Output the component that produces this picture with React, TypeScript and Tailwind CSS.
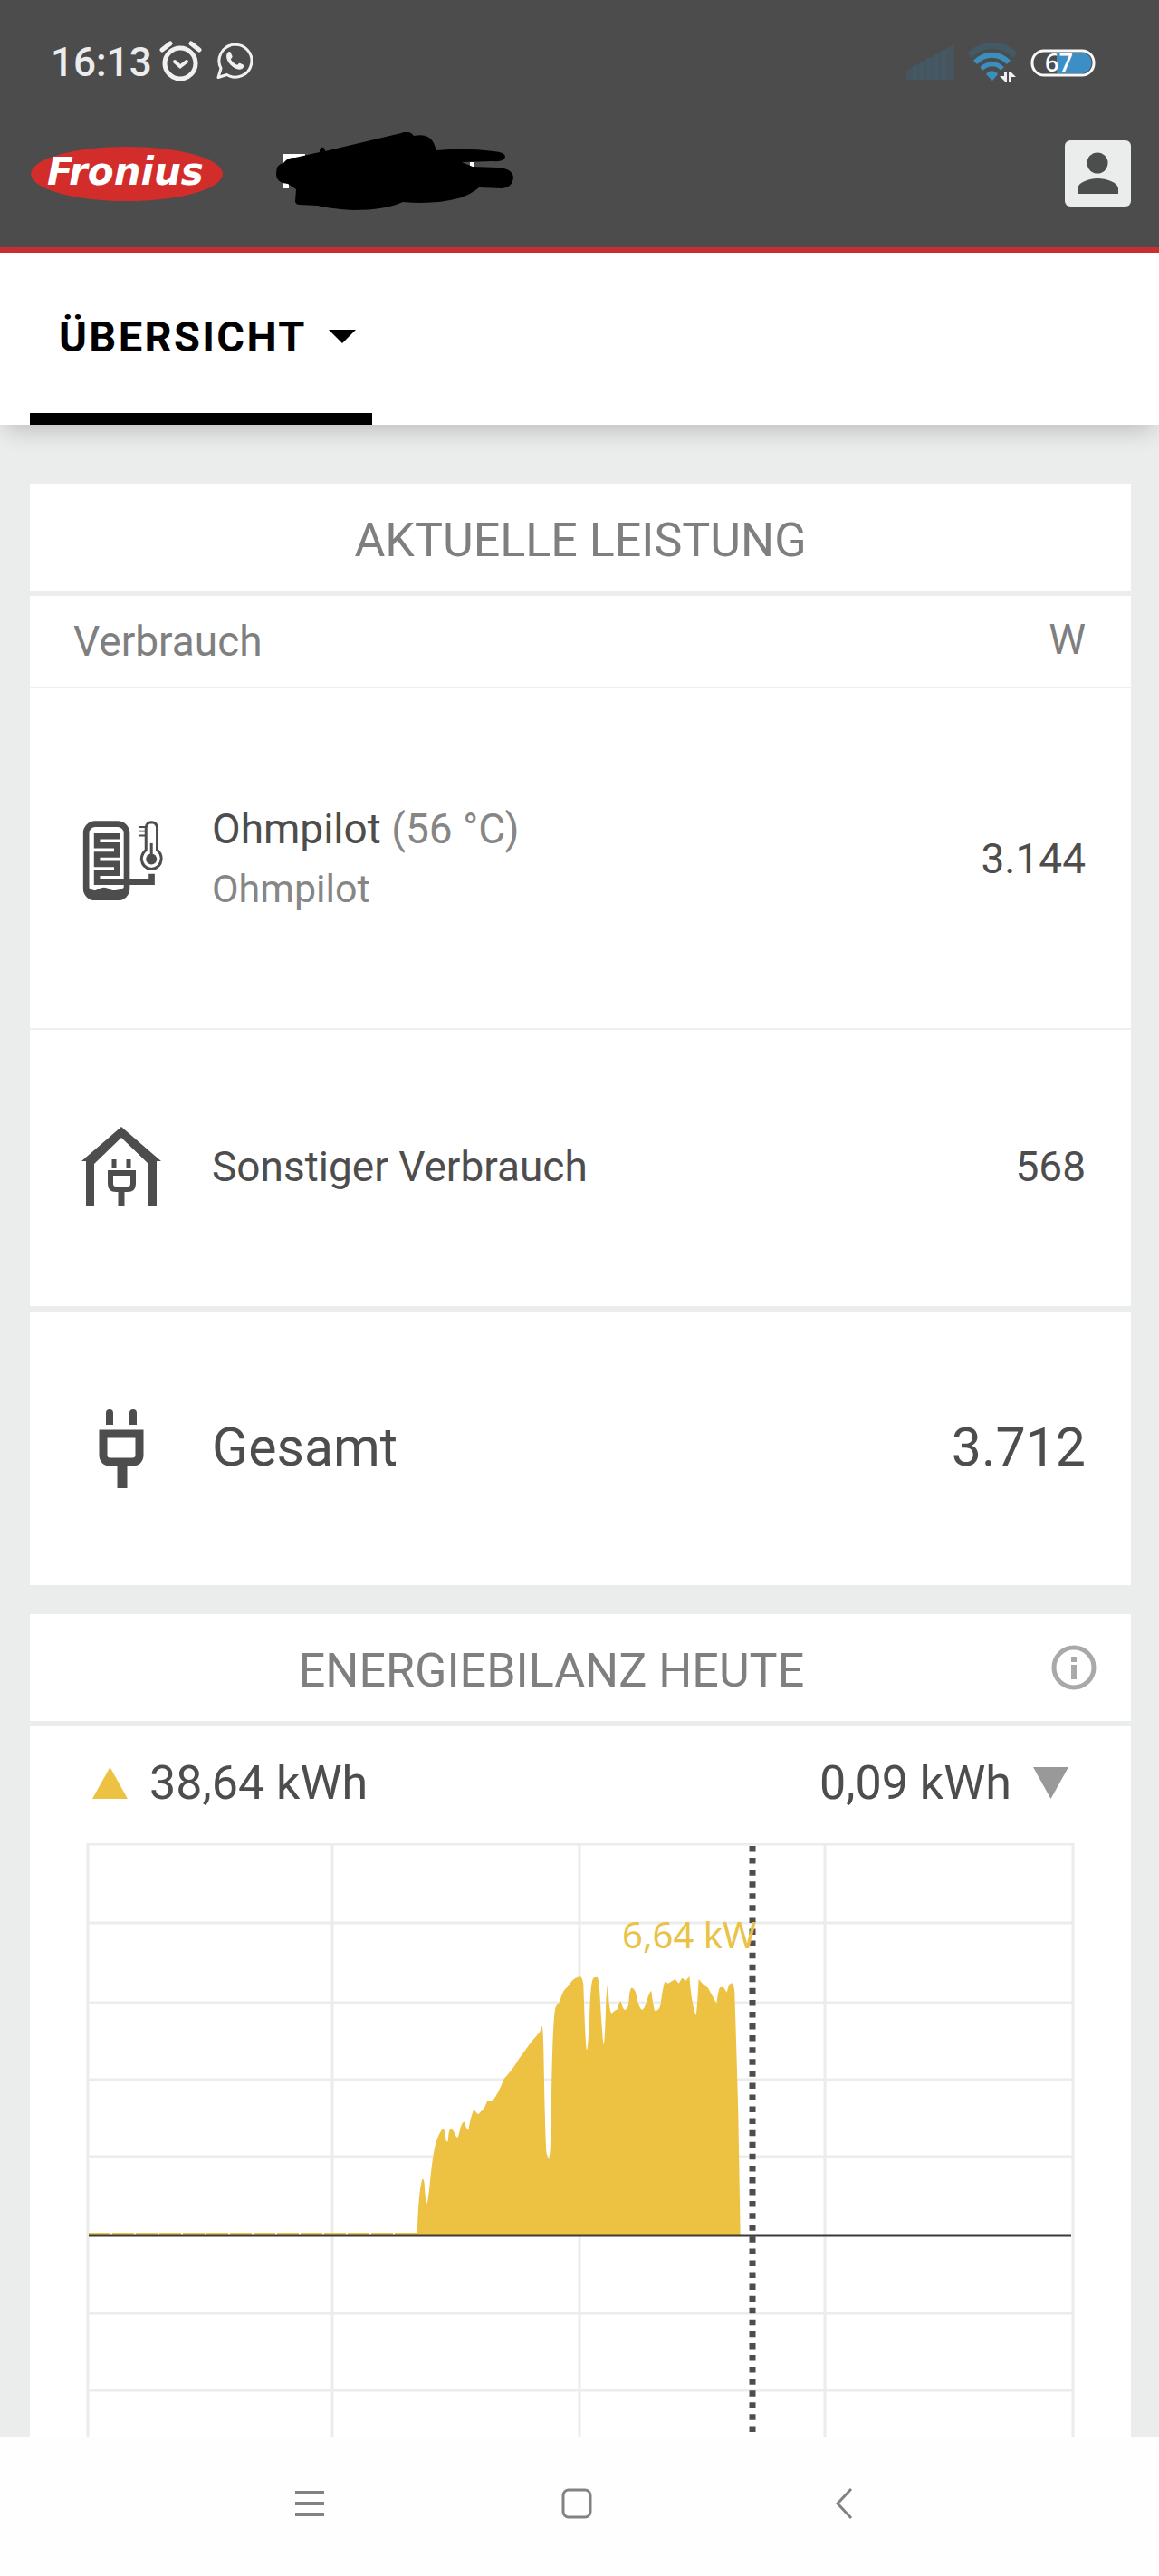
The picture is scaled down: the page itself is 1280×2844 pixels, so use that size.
import type { ReactNode } from 'react';

function AlarmIcon() {
  return (
    <svg viewBox="0 0 47 44" className="h-[44px] w-[47px]" fill="none" stroke="#f0f0f0" strokeLinecap="round" aria-label="Wecker">
      <circle cx="23" cy="25" r="17" strokeWidth="5" />
      <path d="M3 10 L12 3 M35 3 L44 10" strokeWidth="5" />
      <path d="M17 23 L23 28.500 L30 23" strokeWidth="4" />
    </svg>
  );
}

function ChatIcon() {
  return (
    <svg viewBox="0 0 40 40" className="size-10" aria-label="WhatsApp">
      <path d="M2 38.500 L5 28.500 A18 18 0 1 1 11.500 35.500 Z" fill="none" stroke="#f0f0f0" strokeWidth="3" strokeLinejoin="round" />
      <path d="M13 10.500 C14.500 9.500 15.500 10 16 11.500 L17.500 15 C18 16 16.500 17.500 15.800 18.500 C17.500 21.500 20 23.700 23 24.800 C24 24 24.800 22.500 26 22.800 L29.500 24.500 C31 25.200 30 27.500 29 28.500 C25 31.500 19.500 28.500 15.500 24.500 C11 19.500 9.500 14 13 10.500 Z" fill="#f0f0f0" />
    </svg>
  );
}

function SignalIcon() {
  return (
    <svg viewBox="0 0 53 40" className="h-10 w-[53px]" aria-label="Mobilfunk">
      <path d="M0 29 L53 0 V39 H0 Z" fill="#47555e" />
      <path d="M9 24 V39 M17 20 V39 M25 15 V39 M33 11 V39 M41 6 V39" stroke="#435966" strokeWidth="4" />
    </svg>
  );
}

function WifiIcon() {
  return (
    <svg viewBox="0 0 54 42" className="h-[42px] w-[54px]" aria-label="WLAN">
      <path d="M2 13 C16 -1 38 -1 52 13" fill="none" stroke="#435966" strokeWidth="7" />
      <path d="M8 21 C19 10 34 10 45 21" fill="none" stroke="#3b8fc0" strokeWidth="6" />
      <path d="M15 28 C22 21 32 21 38 28" fill="none" stroke="#3b8fc0" strokeWidth="5" />
      <path d="M20 34 C24 29 29 29 33 34 L27 41 Z" fill="#3b8fc0" />
      <path d="M40 31 H43 V42 H41 L35 36 H40 Z M45 42 V31 H47 L53 37 H48 V42 Z" fill="#f0f0f0" />
    </svg>
  );
}

function BatteryIcon() {
  return (
    <svg viewBox="0 -6 72 43" className="h-[43px] w-[72px]" aria-label="Akku 67 Prozent">
      <path d="M29 4 H56 A11 11 0 0 1 56 27 H29 Z" fill="#3b8fc6" />
      <rect x="2" y="2" width="68" height="27" rx="13" fill="none" stroke="#f8f8f8" strokeWidth="3" />
      <text x="16" y="25" fontFamily="Noto Sans, sans-serif" fontSize="27" fontWeight="500" fill="#ffffff">67</text>
    </svg>
  );
}

function Logo() {
  return (
    <svg viewBox="0 0 214 62" className="h-[62px] w-[214px] shrink-0" aria-label="Fronius">
      <ellipse cx="107" cy="31" rx="106" ry="30" fill="#d22c2b" />
      <text x="19" y="43" fontFamily="DejaVu Sans, sans-serif" fontSize="42" fontWeight="700" fontStyle="italic" fill="#ffffff">Fronius</text>
    </svg>
  );
}

function RedactedName() {
  return (
    <svg viewBox="305 146 262 91" className="h-[91px] w-[262px] shrink-0" aria-label="Anlagenname">
      <path d="M313 170 H337 V176 H319 V208 H313 Z M519 179 H524 V184 H519 Z" fill="#ffffff" />
      <path
        d="M305 192 Q305 181 313 180 Q318 173 326 174 L353 168 V165 Q356 160 359 165 V167 L443 147 Q452 143 457 150 Q474 147 479 158 L482 166 Q515 163 545 167 Q558 168 558 173 Q557 179 545 178 L510 179 L522 184 L550 185 Q567 186 567 197 Q565 208 554 208 L529 207 Q520 215 506 219 Q480 226 445 223 Q425 232 390 232 Q360 230 351 227 L331 226 Q326 226 326 222 L327 209 L318 203 Q305 202 305 192 Z"
        fill="#000000"
      />
    </svg>
  );
}

function ProfileIcon() {
  return (
    <svg viewBox="0 0 73 73" className="size-[73px]" aria-hidden="true">
      <rect width="73" height="73" rx="6" fill="#ebeded" />
      <circle cx="36" cy="25" r="11.500" fill="#4c4d4d" />
      <path d="M14 59 V53 C15 46 27 42 36 42 C46 42 58 46 59 53 V59 Z" fill="#4c4d4d" />
    </svg>
  );
}

function OhmpilotIcon() {
  return (
    <svg viewBox="33 50 270 265" className="mx-auto h-[88px] w-[90px]" fill="none" stroke="#4d4d4d" aria-hidden="true">
      <rect x="45" y="61" width="135" height="245" rx="30" strokeWidth="20" />
      <path d="M158 102 H81 V132 H148 V163 H81 V194 H148 V224 H81 V254 H263 V227" strokeWidth="20" />
      <path d="M52 272 Q66 286 80 280 Q105 264 128 280 Q146 286 172 272 L174 292 Q165 305 150 307 H75 Q58 304 52 290 Z" fill="#4d4d4d" stroke="none" />
      <path d="M244 148 V72 Q246 56 262 55 Q279 56 281 72 V148 Q295 158 295 178 Q292 208 262 211 Q232 208 229 178 Q230 158 244 148 Z" strokeWidth="9" />
      <circle cx="262" cy="178" r="18" fill="#4d4d4d" stroke="none" />
      <path d="M262 125 V178" strokeWidth="9" />
      <path d="M219 71 H243 M219 85 H243 M219 100 H243" strokeWidth="6" />
    </svg>
  );
}

function HouseIcon() {
  return (
    <svg viewBox="0 0 88 88" className="mx-auto size-[88px]" aria-hidden="true">
      <path d="M44 0 L88 38 H83 V88 H74 V41 L44 12 L14 41 V88 H5 V38 H0 Z" fill="#4d4d4d" />
      <path d="M36 36 V45 M52 36 V45" stroke="#4d4d4d" strokeWidth="5" />
      <path d="M32 51 H57 V63 Q57 69 51 69 H38 Q32 69 32 63 Z" fill="none" stroke="#4d4d4d" strokeWidth="6" />
      <path d="M44 70 V88" stroke="#4d4d4d" strokeWidth="7" />
    </svg>
  );
}

function PlugIcon() {
  return (
    <svg viewBox="0 0 50 87" className="mx-auto h-[87px] w-[50px]" aria-hidden="true">
      <path d="M8 17 V4 Q8 0 12 0 Q16 0 16 4 V17 Z M34 17 V4 Q34 0 38 0 Q42 0 42 4 V17 Z" fill="#4d4d4d" />
      <path d="M5 27 H45 V50 Q45 58 37 58 H13 Q5 58 5 50 Z" fill="none" stroke="#4d4d4d" strokeWidth="9" />
      <path d="M26 60 V87" stroke="#4d4d4d" strokeWidth="11" />
    </svg>
  );
}

function CardTitle({ children, action }: { children: ReactNode; action?: ReactNode }) {
  return (
    <div className="flex h-[124px] items-center border-b-[6px] border-[#ebeded]">
      <h2 className={action ? 'flex-1 pt-2 pl-6 text-center text-[52px] leading-none text-[#7f7f7f]' : 'flex-1 pt-2 text-center text-[52px] leading-none text-[#7f7f7f]'}>
        {children}
      </h2>
      {action}
    </div>
  );
}

const horizontalLines = [1, 88, 176, 261, 346, 519, 604];
const verticalLines = [2, 272, 545, 816, 1090];

function EnergyChart() {
  return (
    <svg viewBox="0 0 1092 655" className="block h-auto w-full" role="img" aria-label="Energiebilanz im Tagesverlauf">
      <g stroke="#ececec" strokeWidth="3">
        {horizontalLines.map((y) => (
          <line key={y} x1="2" x2="1090" y1={y} y2={y} />
        ))}
        {verticalLines.map((x) => (
          <line key={x} x1={x} x2={x} y1="0" y2="655" />
        ))}
      </g>
      <g transform="translate(345 86) scale(0.3333)">
        <path
          d="M62 1042 Q66 900 78 858 Q82 845 86 870 Q90 935 94 935 Q99 930 106 850 Q116 760 124 735 Q136 694 150 686 Q154 694 158 728 L164 730 Q167 685 174 687 Q182 690 190 712 L197 717 Q202 700 206 683 Q216 656 220 668 Q225 690 232 692 Q238 655 248 628 Q252 622 258 634 L265 640 Q276 626 284 620 L294 597 H310 Q330 575 350 522 Q380 490 400 455 Q430 415 440 400 L468 368 L476 347 Q480 350 482 480 Q486 700 490 765 Q495 788 499 788 Q504 780 506 640 Q510 330 520 288 Q528 270 534 268 Q545 225 560 218 Q580 188 592 187 L601 183 Q610 185 613 210 Q620 425 624 427 Q628 425 633 330 Q636 190 648 187 L659 185 Q665 190 669 270 Q677 405 680 408 Q684 405 688 260 L692 214 Q695 220 698 270 Q702 305 707 305 Q718 295 726 292 Q732 265 737 265 Q744 293 750 295 Q758 290 762 280 Q766 222 772 221 Q780 220 786 235 Q796 288 807 294 Q816 290 824 260 Q832 235 838 231 Q844 285 850 297 Q862 298 868 280 Q878 205 884 200 L894 206 L917 192 L929 206 L940 188 L953 197 L964 182 Q972 280 986 312 Q990 290 995 192 Q1010 212 1025 220 Q1042 250 1054 273 Q1060 225 1066 219 L1077 218 L1088 236 Q1095 206 1104 205 Q1112 208 1114 235 Q1122 480 1126 640 Q1130 850 1133 1042 Z"
          fill="#edc242"
        />
      </g>
      <path d="M3 431 H365" stroke="#edc242" strokeWidth="2" strokeDasharray="24 2" />
      <line x1="736" x2="736" y1="3" y2="655" stroke="#4d4d4d" strokeWidth="7" strokeDasharray="6.500 6.570" />
      <line x1="3" x2="1088" y1="433" y2="433" stroke="#3a3a38" strokeWidth="3" />
      <text x="592" y="116" fontFamily="Noto Sans, sans-serif" fontSize="40" fill="#e9c247">6,64 kW</text>
    </svg>
  );
}

function InfoButton() {
  return (
    <button type="button" aria-label="Information" className="mr-[38px]">
      <svg viewBox="0 0 50 50" className="size-[50px]" aria-hidden="true">
        <circle cx="25" cy="25" r="22" fill="none" stroke="#a9a9a9" strokeWidth="5" />
        <path d="M22 13 H28 V19 H22 Z M22 22 H28 V38 H22 Z" fill="#a9a9a9" />
      </svg>
    </button>
  );
}

export default function App() {
  return (
    <div className="flex min-h-screen flex-col bg-[#ebeded] font-['Roboto',sans-serif] text-[#4d4d4d]">
      <header className="border-b-[6px] border-[#c92e32] bg-[#4c4c4c] pb-7">
        <div className="flex h-[138px] items-center pr-[70px] pl-14">
          <time className="text-[44px] leading-none font-medium text-[#ececec]">16:13</time>
          <div className="ml-2 flex items-center gap-4 pb-1">
            <AlarmIcon />
            <ChatIcon />
          </div>
          <div className="ml-auto flex items-center gap-[15px]">
            <SignalIcon />
            <WifiIcon />
            <BatteryIcon />
          </div>
        </div>
        <div className="flex h-[107px] items-center pr-[31px] pl-[33px]">
          <Logo />
          <div className="ml-[58px]">
            <RedactedName />
          </div>
          <button type="button" aria-label="Profil" className="ml-auto">
            <ProfileIcon />
          </button>
        </div>
      </header>

      <nav className="z-10 flex h-[190px] bg-white pl-[33px] shadow-[0_12px_24px_-6px_rgba(0,0,0,0.2)]">
        <button type="button" className="flex items-center gap-6 border-b-[13px] border-black pt-2 pr-[18px] pl-8 text-[47px] leading-none font-bold tracking-wider text-black">
          ÜBERSICHT
          <svg viewBox="0 0 30 15" className="h-[15px] w-[30px]" aria-hidden="true">
            <path d="M0 0 H30 L15 15 Z" fill="#000000" />
          </svg>
        </button>
      </nav>

      <main className="flex flex-col gap-8 pt-[65px] pr-[31px] pl-[33px]">
        <section className="bg-white">
          <CardTitle>AKTUELLE LEISTUNG</CardTitle>
          <table className="w-full border-separate border-spacing-0 text-[46px] leading-none">
            <colgroup>
              <col className="w-[201px]" />
              <col />
              <col />
            </colgroup>
            <thead>
              <tr className="text-[#7f7f7f]">
                <th scope="col" colSpan={2} className="h-[102px] border-b-2 border-[#efefef] p-0 pl-12 text-left font-normal">Verbrauch</th>
                <th scope="col" className="h-[102px] border-b-2 border-[#efefef] p-0 pr-[50px] pb-1 text-right font-normal">W</th>
              </tr>
            </thead>
            <tbody>
              <tr>
                <td className="h-[377px] border-b-2 border-[#efefef] p-0 pt-1 pl-1"><OhmpilotIcon /></td>
                <th scope="row" className="border-b-2 border-[#efefef] p-0 text-left leading-[66px] font-normal">
                  <div>Ohmpilot <span className="text-[#868686]">(56 °C)</span></div>
                  <div className="text-[43px] text-[#868686]">Ohmpilot</div>
                </th>
                <td className="border-b-2 border-[#efefef] p-0 pr-[50px] text-right">3.144</td>
              </tr>
              <tr>
                <td className="h-[311px] border-b-[6px] border-[#ebeded] p-0 pb-1"><HouseIcon /></td>
                <th scope="row" className="border-b-[6px] border-[#ebeded] p-0 pb-1 text-left font-normal">Sonstiger Verbrauch</th>
                <td className="border-b-[6px] border-[#ebeded] p-0 pr-[50px] pb-1 text-right">568</td>
              </tr>
            </tbody>
            <tfoot>
              <tr className="text-[59px]">
                <td className="h-[302px] p-0"><PlugIcon /></td>
                <th scope="row" className="p-0 pb-1 text-left font-normal">Gesamt</th>
                <td className="p-0 pr-[50px] pb-1 text-right">3.712</td>
              </tr>
            </tfoot>
          </table>
        </section>

        <section className="bg-white">
          <CardTitle action={<InfoButton />}>ENERGIEBILANZ HEUTE</CardTitle>
          <div className="flex h-[129px] items-center justify-between px-[69px] pb-1 text-[52px] leading-none">
            <div className="flex items-center gap-6">
              <svg viewBox="0 0 39 35" className="h-[35px] w-[39px]" aria-hidden="true">
                <path d="M19.500 0 L39 35 H0 Z" fill="#edc242" />
              </svg>
              38,64 kWh
            </div>
            <div className="flex items-center gap-6">
              0,09 kWh
              <svg viewBox="0 0 39 35" className="h-[35px] w-[39px]" aria-hidden="true">
                <path d="M0 0 H39 L19.500 35 Z" fill="#999999" />
              </svg>
            </div>
          </div>
          <div className="px-[62px]">
            <EnergyChart />
          </div>
        </section>
      </main>

      <footer className="grid h-[154px] grid-cols-3 items-center justify-items-center bg-[#fefefe] pr-[201px] pb-[7px] pl-[195px]">
        <button type="button" aria-label="Letzte Apps">
          <svg viewBox="0 0 32 28" className="h-7 w-8" stroke="#828282" strokeWidth="4" aria-hidden="true">
            <path d="M0 2 H32 M0 14 H32 M0 26 H32" />
          </svg>
        </button>
        <button type="button" aria-label="Startbildschirm">
          <svg viewBox="0 0 34 34" className="size-[34px]" aria-hidden="true">
            <rect x="2" y="2" width="30" height="30" rx="6" fill="none" stroke="#828282" strokeWidth="3" />
          </svg>
        </button>
        <button type="button" aria-label="Zurück">
          <svg viewBox="0 0 20 34" className="h-[34px] w-5" aria-hidden="true">
            <path d="M18 1 L3 17 L18 33" fill="none" stroke="#828282" strokeWidth="3" />
          </svg>
        </button>
      </footer>
    </div>
  );
}
